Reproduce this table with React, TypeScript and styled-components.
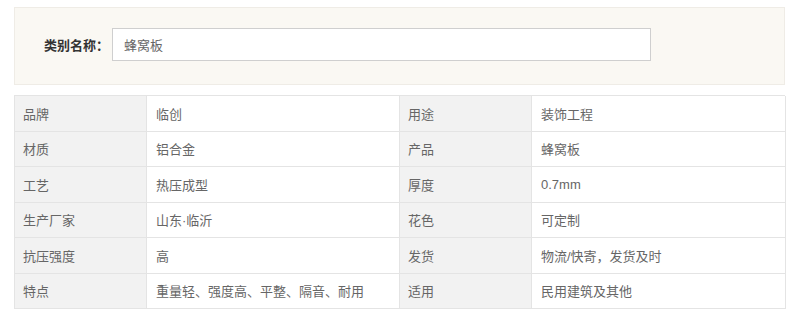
import React from "react";
import styled, { createGlobalStyle } from "styled-components";

const GlobalStyle = createGlobalStyle`
  body {
    margin: 0;
    background: #ffffff;
    font-family: "Liberation Sans", "Noto Sans CJK SC", sans-serif;
  }
`;

const specs: [string, string, string, string][] = [
  ["品牌", "临创", "用途", "装饰工程"],
  ["材质", "铝合金", "产品", "蜂窝板"],
  ["工艺", "热压成型", "厚度", "0.7mm"],
  ["生产厂家", "山东·临沂", "花色", "可定制"],
  ["抗压强度", "高", "发货", "物流/快寄，发货及时"],
  ["特点", "重量轻、强度高、平整、隔音、耐用", "适用", "民用建筑及其他"],
];

export default function App() {
  return (
    <Page>
      <GlobalStyle />
      <FilterPanel>
        <FieldLabel>类别名称：</FieldLabel>
        <FieldInput type="text" defaultValue="蜂窝板" />
      </FilterPanel>
      <SpecGrid>
        {specs.map((row) =>
          row.map((text, i) => (
            <Cell key={row[0] + i} $label={i % 2 === 0}>
              {text}
            </Cell>
          ))
        )}
      </SpecGrid>
    </Page>
  );
}

const Page = styled.div`
  padding: 7px 0 0 14px;
  width: 771px;
`;

const FilterPanel = styled.div`
  display: flex;
  align-items: center;
  box-sizing: border-box;
  height: 78px;
  padding: 0 0 3px 29px;
  background: #faf8f3;
  border: 1px solid #efece6;
`;

const FieldLabel = styled.label`
  width: 68px;
  font-size: 13px;
  font-weight: bold;
  color: #333;
  white-space: nowrap;
`;

const FieldInput = styled.input`
  box-sizing: border-box;
  width: 539px;
  height: 33px;
  padding: 0 11px;
  border: 1px solid #cfcfcf;
  background: #fff;
  font-family: inherit;
  font-size: 13px;
  color: #666;
  outline: none;
`;

const SpecGrid = styled.div`
  display: grid;
  grid-template-columns: 132px 253px 132px 254px;
  margin-top: 10px;
  border-top: 1px solid #e4e4e4;
  border-left: 1px solid #e4e4e4;
`;

const Cell = styled.div<{ $label: boolean }>`
  display: flex;
  align-items: center;
  box-sizing: border-box;
  height: 35.5px;
  padding-left: ${(p) => (p.$label ? "8px" : "9px")};
  border-right: 1px solid #e4e4e4;
  border-bottom: 1px solid #e4e4e4;
  background: ${(p) => (p.$label ? "#f2f2f2" : "#ffffff")};
  font-size: 13px;
  color: #666;
  white-space: nowrap;
`;
